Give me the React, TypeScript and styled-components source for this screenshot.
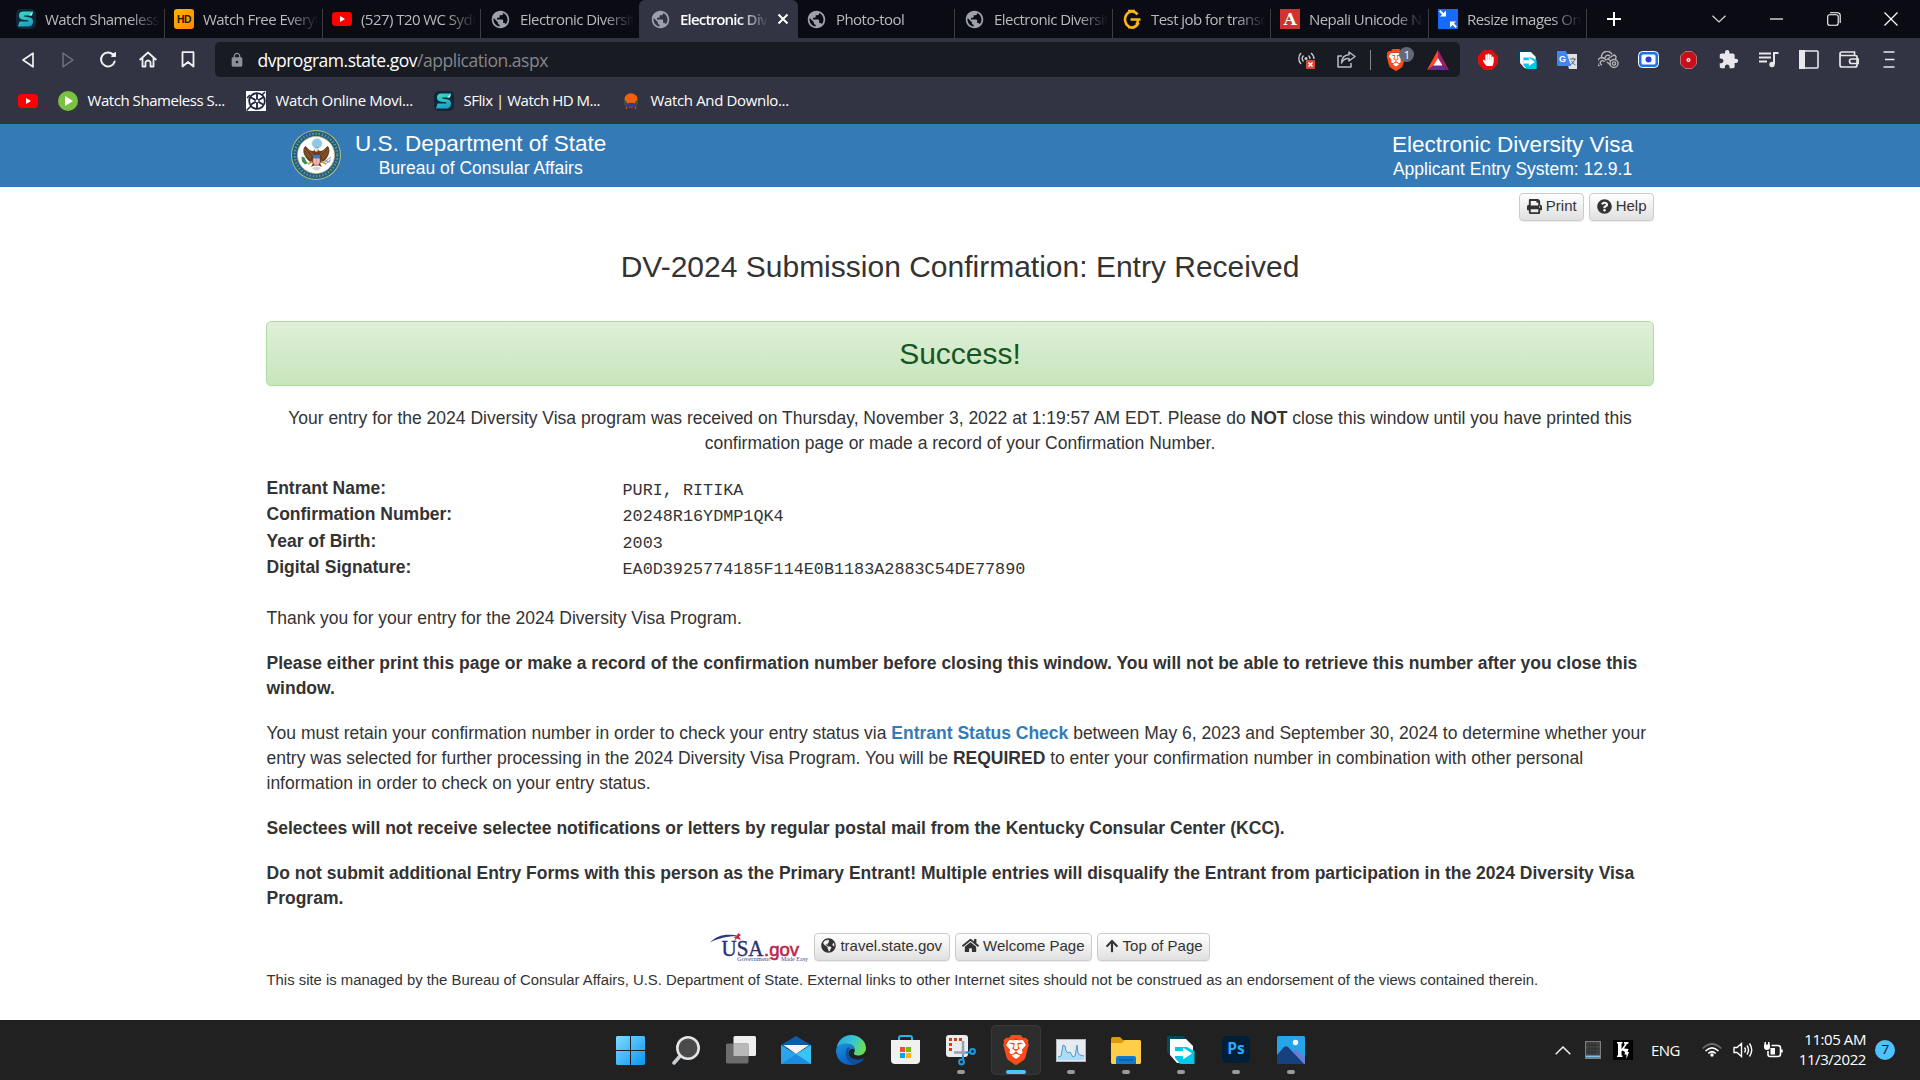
import React from "react";
import styled, { createGlobalStyle, css } from "styled-components";
import { MdPublic, MdLock, MdExtension } from "react-icons/md";
import {
  FaPrint,
  FaQuestionCircle,
  FaGlobeAmericas,
  FaHome,
  FaArrowUp,
  FaHandPaper,
} from "react-icons/fa";
import { SiBrave } from "react-icons/si";

const ui = `"Open Sans", "Noto Sans", sans-serif`;
const arial = `"Liberation Sans", Arial, sans-serif`;

const Global = createGlobalStyle`
  * { box-sizing: border-box; }
  body { margin: 0; background: #fff; overflow: hidden; }
  svg { display: block; flex: none; }
`;

const Screen = styled.div`
  width: 1920px;
  height: 1080px;
  display: flex;
  flex-direction: column;
  overflow: hidden;
  font-family: ${arial};
`;

/* ---------- Browser chrome ---------- */

const TabStrip = styled.div`
  height: 38px;
  flex: none;
  background: #0b0b14;
  display: flex;
  padding-left: 7px;
`;

const Tab = styled.div<{ $active?: boolean; $bare?: boolean }>`
  width: 158px;
  flex: none;
  display: flex;
  align-items: center;
  padding: 0 5px 0 9px;
  gap: 9px;
  font: 15px/20px ${ui};
  letter-spacing: -0.55px;
  color: #b9bac0;
  background: linear-gradient(#3c3c42, #3c3c42) right 9px / 1px 29px no-repeat;
  ${(p) => p.$bare && css`background: none;`}
  ${(p) =>
    p.$active &&
    css`
      background: #323443;
      color: #fff;
      font-weight: 600;
      letter-spacing: -0.8px;
      border-radius: 6px 6px 0 0;
      padding-right: 9px;
      padding-left: 11px;
      width: 159px;
      margin-right: -1px;
    `}
`;

const TabTitle = styled.span`
  flex: 1;
  min-width: 0;
  overflow: hidden;
  white-space: nowrap;
  padding-bottom: 1px;
  mask-image: linear-gradient(to right, #000 calc(100% - 30px), transparent);
`;

const NewTab = styled.div`
  width: 53px;
  display: flex;
  align-items: center;
  justify-content: center;
`;

const WindowButtons = styled.div`
  margin-left: auto;
  display: flex;
  align-items: center;
`;

const WindowButton = styled.div`
  width: 57.5px;
  display: flex;
  justify-content: center;
`;

const Toolbar = styled.div`
  height: 43px;
  flex: none;
  background: #323443;
  display: flex;
  align-items: center;
  padding-left: 8px;
`;

const NavSlot = styled.div`
  width: 39.9px;
  display: flex;
  justify-content: center;
`;

const AddressBar = styled.div`
  width: 1245px;
  height: 35px;
  margin-left: 8px;
  border-radius: 5px;
  background: #191b22;
  display: flex;
  align-items: center;
  padding-left: 14px;
  color: #8e9097;
`;

const Url = styled.span`
  margin-left: 12px;
  font: 17.5px/24px ${ui};
  letter-spacing: -0.48px;
  color: #85868c;
  b { font-weight: 400; color: #fff; }
`;

const AddressActions = styled.div`
  margin-left: auto;
  display: flex;
  align-items: center;
`;

const ActionSlot = styled.div<{ $w: number }>`
  width: ${(p) => p.$w}px;
  display: flex;
  justify-content: center;
  position: relative;
`;

const Badge = styled.span`
  position: absolute;
  left: 24px;
  top: -2px;
  width: 15px;
  height: 15px;
  border-radius: 8px;
  background: #656877;
  color: #fff;
  font: 11px/15px ${ui};
  text-align: center;
`;

const Extensions = styled.div`
  margin-left: 7px;
  display: flex;
  align-items: center;
`;

const ExtSlot = styled.div`
  width: 40.2px;
  display: flex;
  justify-content: center;
  color: #e8e8ea;
`;

const Bookmarks = styled.div`
  height: 43px;
  flex: none;
  background: #323443;
  display: flex;
  align-items: center;
  padding: 0 0 4px 18px;
`;

const Bookmark = styled.div<{ $w: number; $spacing?: number }>`
  width: ${(p) => p.$w}px;
  display: flex;
  align-items: center;
  gap: 9.5px;
  font: 15px/20px ${ui};
  letter-spacing: ${(p) => p.$spacing ?? -0.35}px;
  color: #fff;
  white-space: nowrap;
`;

const BookmarkLabel = styled.span`
  padding-bottom: 2px;
`;

/* ---------- Page ---------- */

const SiteHeader = styled.header`
  height: 63px;
  flex: none;
  background: #337ab7;
  color: #fff;
  display: flex;
  padding: 6px 287px 0 291px;
`;

const Brand = styled.div<{ $right?: boolean }>`
  display: flex;
  flex-direction: column;
  align-items: center;
  margin-left: ${(p) => (p.$right ? "auto" : "14px")};
  padding-top: ${(p) => (p.$right ? 2 : 1)}px;
`;

const BrandTitle = styled.div`
  font-size: 22.5px;
  line-height: 26px;
`;

const BrandSub = styled.div`
  font-size: 17.5px;
  line-height: 23px;
`;

const Page = styled.main`
  flex: 1;
  width: 1388px;
  margin: 0 auto;
  color: #333;
  font-size: 17.5px;
  line-height: 25px;
  display: flex;
  flex-direction: column;
`;

const ButtonRow = styled.div<{ $center?: boolean }>`
  display: flex;
  align-items: center;
  gap: 5px;
  justify-content: ${(p) => (p.$center ? "center" : "flex-end")};
  margin-top: ${(p) => (p.$center ? 21 : 6)}px;
`;

const Button = styled.button`
  height: 28px;
  padding: 0 6.5px 2px;
  display: flex;
  align-items: center;
  gap: 4px;
  border: 1px solid #ccc;
  border-radius: 4px;
  background: linear-gradient(#fff, #e0e0e0);
  box-shadow: inset 0 1px 0 rgba(255, 255, 255, 0.15), 0 1px 1px rgba(0, 0, 0, 0.075);
  color: #333;
  font: 15px/22px ${arial};
  white-space: nowrap;
`;

const Title = styled.h1`
  margin: 29px 0 38px;
  font-size: 30px;
  line-height: 33px;
  font-weight: 400;
  text-align: center;
`;

const Alert = styled.div`
  height: 65px;
  border: 1px solid #b2dba1;
  border-radius: 5px;
  background: linear-gradient(#dff0d8, #c8e5bc);
  box-shadow: 0 1px 2px rgba(0, 0, 0, 0.05);
  color: #155724;
  font-size: 30px;
  line-height: 63px;
  text-align: center;
`;

const Intro = styled.p`
  margin: 20px 0;
  text-align: center;
`;

const Details = styled.dl`
  margin: 0 0 24px;
  padding-left: 0.5px;
  display: grid;
  grid-template-columns: 356px 1fr;
  grid-auto-rows: 26.4px;
`;

const Term = styled.dt`
  font-weight: 700;
`;

const Value = styled.dd`
  margin: 0;
  padding-top: 2px;
  font: 16.8px/26px "Liberation Mono", "Courier New", monospace;
`;

const Para = styled.p<{ $bold?: boolean }>`
  margin: 0 0 20px;
  padding-left: 0.5px;
  white-space: nowrap;
  font-weight: ${(p) => (p.$bold ? 700 : 400)};
  &:last-of-type { margin-bottom: 0; }
`;

const Link = styled.a`
  color: #337ab7;
  font-weight: 700;
`;

const Disclaimer = styled.div`
  margin-top: 6px;
  padding-left: 0.5px;
  font-size: 14.87px;
  line-height: 24px;
  white-space: nowrap;
`;

/* ---------- Taskbar ---------- */

const Taskbar = styled.footer`
  height: 60px;
  flex: none;
  background: #212121;
  display: flex;
  align-items: center;
  padding-left: 603px;
  color: #fff;
`;

const TaskSlot = styled.div`
  width: 55px;
  height: 60px;
  display: flex;
  align-items: center;
  justify-content: center;
`;

const TaskTile = styled.div<{ $active?: boolean }>`
  width: 50px;
  height: 50px;
  border-radius: 5px;
  display: flex;
  align-items: center;
  justify-content: center;
  position: relative;
  ${(p) => p.$active && css`background: #2d2d2d; box-shadow: inset 0 0 0 1px #383838;`}
`;

const Indicator = styled.span<{ $active?: boolean }>`
  position: absolute;
  bottom: 1px;
  left: 50%;
  transform: translateX(-50%);
  width: ${(p) => (p.$active ? 20 : 8)}px;
  height: 4px;
  border-radius: 2px;
  background: ${(p) => (p.$active ? "#4cc2ff" : "#9a9a9a")};
`;

const Tray = styled.div`
  margin-left: auto;
  display: flex;
  align-items: center;
  padding-right: 25px;
  font: 15px/20px ${ui};
  letter-spacing: -0.5px;
`;

const TraySlot = styled.div<{ $w: number }>`
  width: ${(p) => p.$w}px;
  display: flex;
  justify-content: center;
`;

const Clock = styled.div`
  width: 76px;
  text-align: right;
  white-space: nowrap;
  margin: 0 9px 0 0;
  padding-bottom: 2px;
  letter-spacing: -0.42px;
`;

const Count = styled.div`
  width: 20px;
  height: 20px;
  border-radius: 50%;
  background: #4cc2ff;
  color: #111;
  font-size: 13.5px;
  line-height: 19px;
  text-align: center;
`;

/* ---------- Icons ---------- */

const Sflix = () => (
  <svg width="20" height="20" viewBox="0 0 20 20">
    <defs>
      <linearGradient id="sf" x1="0" y1="0" x2="0.4" y2="1">
        <stop offset="0" stopColor="#3fe0c0" />
        <stop offset="1" stopColor="#1fa3c4" />
      </linearGradient>
    </defs>
    <rect width="20" height="20" rx="5" fill="#12263a" />
    <path d="M17 2.500H7.500C4.500 2.500 3 4 3 6.500S4.500 10.500 7 10.700L12 11.200C12.600 11.300 12.600 12.500 12 12.500H3.500L2 17.500H11.500C15.500 17.500 17 15.500 17 12.500S15.500 8.500 13 8.200L8.500 7.600C8 7.500 8 6.500 8.500 6.500H15Z" fill="url(#sf)" />
    <path d="M13 6.500L17 2.500L16 6.500Z" fill="#a6fff0" />
  </svg>
);

const HdIcon = () => (
  <svg width="20" height="20" viewBox="0 0 20 20">
    <defs>
      <linearGradient id="hd" x1="0" y1="0" x2="1" y2="1">
        <stop offset="0" stopColor="#ffb300" />
        <stop offset="1" stopColor="#ff8a00" />
      </linearGradient>
    </defs>
    <rect width="20" height="20" rx="3" fill="url(#hd)" />
    <text x="10" y="14" textAnchor="middle" fontFamily="Liberation Sans, sans-serif" fontWeight="700" fontSize="11.500" textLength="14" lengthAdjust="spacingAndGlyphs" fill="#1d1505">HD</text>
  </svg>
);

const YouTube = () => (
  <svg width="20" height="20" viewBox="0 0 20 20">
    <rect y="3" width="20" height="14" rx="3.500" fill="#f00" />
    <path d="M8 7L13 10L8 13Z" fill="#fff" />
  </svg>
);

const Globe = () => <MdPublic size={21} color="#9da1ab" />;

const GIcon = () => (
  <svg width="20" height="20" viewBox="0 0 20 20" fill="none" stroke="#fdb515" strokeWidth="2.600">
    <path d="M15.500 5.500A7 8 0 1 0 16.500 13.500M8.500 10.500H18.500M16 10.500A7 8 0 0 1 14.500 15.500" />
    <path d="M6 1.500H13M6 18.700H13" strokeWidth="1.600" />
  </svg>
);

const NepaliIcon = () => (
  <svg width="20" height="20" viewBox="0 0 20 20">
    <rect width="20" height="20" fill="#d0342c" />
    <text x="10" y="15.500" textAnchor="middle" fontFamily="DejaVu Serif, serif" fontWeight="700" fontSize="16.500" fill="#fff">A</text>
  </svg>
);

const ResizeIcon = () => (
  <svg width="20" height="20" viewBox="0 0 20 20" fill="#fff">
    <rect width="20" height="20" fill="#1769ff" />
    <path d="M8 1.500V7.500H2L4 5.500L1 2.500L2.500 1L5.500 4Z" />
    <path d="M12 12.500H18L16 14.500L19 17.500L17.500 19L14.500 16L12 18.500Z" />
  </svg>
);

const Reel = () => (
  <svg width="20" height="20" viewBox="0 0 20 20">
    <rect width="20" height="20" fill="#fff" />
    <circle cx="11" cy="10" r="7.800" fill="none" stroke="#1b2140" strokeWidth="1.800" />
    <path d="M11 3V17M5 6.500L17 13.500M5 13.500L17 6.500" stroke="#1b2140" strokeWidth="1.800" />
    <circle cx="11" cy="10" r="2" fill="#fff" stroke="#1b2140" />
    <path d="M0.500 19.500L5.500 14.500M1 7L4 4M16 4L19 1" stroke="#1b2140" strokeWidth="1.500" />
  </svg>
);

const GreenPlay = () => (
  <svg width="20" height="20" viewBox="0 0 20 20">
    <circle cx="10" cy="10" r="10" fill="#7ac142" />
    <path d="M7 5L15 10L7 15Z" fill="#fff" />
  </svg>
);

const Throne = () => (
  <svg width="20" height="20" viewBox="0 0 20 20">
    <ellipse cx="10" cy="8" rx="6.500" ry="5.800" fill="#f2600c" />
    <path d="M3 9.500Q5.500 9 6 12.500Q10 11 14 12.500Q14.500 9 17 9.500Q18 12.500 16 15H4Q2 12.500 3 9.500Z" fill="#2e5a3a" />
    <path d="M5 13Q10 11.500 15 13V15.500H5Z" fill="#2b3a9c" />
    <path d="M5.500 15.500V18M14.500 15.500V18M9 15.500V17M11 15.500V17" stroke="#e0401c" strokeWidth="1.300" />
  </svg>
);

const line = { fill: "none", stroke: "#f0f0f2", strokeLinejoin: "round" as const, strokeLinecap: "round" as const };

const Seal = () => (
  <svg width="50" height="50" viewBox="0 0 50 50">
    <circle cx="25" cy="25" r="25" fill="#b9bd7e" />
    <circle cx="25" cy="25" r="24" fill="#1f5f86" />
    <circle cx="25" cy="25" r="21.300" fill="none" stroke="#6f9a80" strokeWidth="2.400" strokeDasharray="1.300 1.900" />
    <circle cx="25" cy="25" r="18.500" fill="#fff" stroke="#c9c483" strokeWidth="0.800" />
    <circle cx="26" cy="13.500" r="5" fill="#8fc7e6" stroke="#b7d8ea" strokeWidth="0.600" />
    <path d="M23.500 20.500C21 22 18 20 14.500 16C11.500 18 12 23 14 26C16 30 19 32.500 22 33L20 37L23 35.500H28L31 37L29 33C32 32.500 35 30 37 26C39 22 39 18 36.500 16C33 20 30 22 27.500 20.500L27 18Q25 16.500 24 18Z" fill="#6b3f1d" />
    <path d="M13.500 19L20 27M14 22.500L19.500 29M37.500 19L31 27M37 22.500L31.500 29M16 18.500L22 25M35 18.500L29 25" stroke="#a0703c" strokeWidth="0.800" />
    <path d="M22 27H29V31.500Q29 34 25.500 35.500Q22 34 22 31.500Z" fill="#ea97a2" />
    <path d="M22 25H29V28.500H22Z" fill="#3f78c0" />
    <path d="M24 28.500V34.500M27 28.500V34.500" stroke="#fff" strokeWidth="0.600" />
    <path d="M24 18.500Q25.500 16.500 27 18.500L26.500 21.500H24Z" fill="#efe9d8" />
    <path d="M10.500 26.500L13.500 27.500L15 31L17 33L14 34.500L11 31.500Z" fill="#3d8b5a" />
    <path d="M17 34L21.500 31.500M35 34L30 31.500" stroke="#c39a35" strokeWidth="1.500" />
    <path d="M33.500 32L40 27M34.500 34L40 29.500M33 30.500L39 32" stroke="#8b929a" strokeWidth="1" />
    <path d="M21 38L25.500 36.500L30 38L27 40.500H24Z" fill="#d8d3cf" />
  </svg>
);

const UsaGov = () => (
  <svg width="99" height="30" viewBox="0 0 99 30">
    <path d="M0 10.500C7 3 16 1 30 4C18 3.800 8 6.500 0 10.500Z" fill="#2b3a80" />
    <path d="M23 5L27 4L28 1L31 3L29 4.500L31 8L27 6.500L24 9L25.500 6Z" fill="#c8203f" />
    <text x="11.500" y="24" fontFamily="Liberation Serif, serif" fontSize="23" fill="#2c2f73" stroke="#2c2f73" strokeWidth="0.400" textLength="42" lengthAdjust="spacingAndGlyphs">USA</text>
    <text x="54" y="24" fontFamily="Liberation Sans, sans-serif" fontSize="19" fill="#bb2649" stroke="#bb2649" strokeWidth="0.600" textLength="35" lengthAdjust="spacingAndGlyphs">.gov</text>
    <text x="27" y="28.800" fontFamily="Liberation Serif, serif" fontSize="5.500" fill="#4a4f8c" textLength="33" lengthAdjust="spacingAndGlyphs">Government</text>
    <text x="71" y="28.800" fontFamily="Liberation Serif, serif" fontSize="5.500" fill="#4a4f8c" textLength="27" lengthAdjust="spacingAndGlyphs">Made Easy</text>
  </svg>
);

const ShareCube = ({ size }: { size: number }) => (
  <svg width={size} height={size} viewBox="0 0 28 28">
    <path d="M0 0H17L20 5H6V22L0 16Z" fill="#06465f" />
    <path d="M3 3H19L26 10V27H10L3 19Z" fill="#fff" />
    <path d="M8 11H20L27.500 15V28H13L8 22Z" fill="#00c8e6" />
    <path d="M8 15H16V11.500L25 17.500L16 23.500V20H8Z" fill="#fff" />
  </svg>
);

const Brave = ({ size }: { size: number }) => (
  <svg width={size} height={size} viewBox="0 0 24 24">
    <path d="M6 4H18L20 8L17 18L12 22L7 18L4 8Z" fill="#fff" />
    <SiBrave size={24} color="#fb4a1c" />
  </svg>
);

const tabs: { icon: React.ReactNode; title: string; active?: boolean; bare?: boolean }[] = [
  { icon: <Sflix />, title: "Watch Shameless S" },
  { icon: <HdIcon />, title: "Watch Free Everyth" },
  { icon: <YouTube />, title: "(527) T20 WC Sydn" },
  { icon: <Globe />, title: "Electronic Diversity", bare: true },
  { icon: <Globe />, title: "Electronic Diver", active: true },
  { icon: <Globe />, title: "Photo-tool" },
  { icon: <Globe />, title: "Electronic Diversity" },
  { icon: <GIcon />, title: "Test job for transcri" },
  { icon: <NepaliIcon />, title: "Nepali Unicode Ne" },
  { icon: <ResizeIcon />, title: "Resize Images Onli" },
];

const taskIcons: { icon: React.ReactNode; running?: boolean; active?: boolean }[] = [
  {
    icon: (
      <svg width="29" height="29" viewBox="0 0 29 29">
        <defs>
          <linearGradient id="win" x1="0" y1="0" x2="1" y2="1">
            <stop offset="0" stopColor="#7fdcff" />
            <stop offset="1" stopColor="#0a95f5" />
          </linearGradient>
        </defs>
        <path d="M1 0H14V14H0V1ZM15 0H28L29 1V14H15ZM0 15H14V29H1L0 28ZM15 15H29V28L28 29H15Z" fill="url(#win)" />
      </svg>
    ),
  },
  {
    icon: (
      <svg width="28" height="29" viewBox="0 0 28 29">
        <path d="M2 27L9 19" stroke="#c9ccd0" strokeWidth="3.500" strokeLinecap="round" />
        <circle cx="16" cy="12" r="10.700" fill="#4a4a4a" stroke="#e2e5e8" strokeWidth="2.600" />
      </svg>
    ),
  },
  {
    icon: (
      <svg width="30" height="28" viewBox="0 0 30 28">
        <rect x="7.500" width="22.500" height="20" rx="1.500" fill="#eeeeee" />
        <rect y="7.500" width="22.500" height="20" rx="1.500" fill="#6c6c6c" />
        <rect x="7.500" y="7.500" width="15" height="12.500" fill="#b9b9b9" />
      </svg>
    ),
  },
  {
    icon: (
      <svg width="30" height="28" viewBox="0 0 30 28">
        <path d="M0 9L15 0L30 9V12H0Z" fill="#0d5aa7" />
        <path d="M0 9L15 18L30 9V28H0Z" fill="#2aa5ea" />
        <path d="M2.500 9H28L15 18Z" fill="#f4f4f4" />
        <path d="M0 28L30 9V28Z" fill="#38c3f6" />
        <path d="M0 28L15 18L30 28Z" fill="#1b8be0" />
      </svg>
    ),
  },
  {
    icon: (
      <svg width="30" height="30" viewBox="0 0 30 30">
        <defs>
          <linearGradient id="e1" x1="0" y1="0.300" x2="1" y2="0.600">
            <stop offset="0" stopColor="#2ba7dc" />
            <stop offset="0.500" stopColor="#35c6d2" />
            <stop offset="1" stopColor="#6fe04a" />
          </linearGradient>
          <linearGradient id="e2" x1="0" y1="0" x2="0.500" y2="1">
            <stop offset="0" stopColor="#1793e2" />
            <stop offset="1" stopColor="#0d5cb8" />
          </linearGradient>
        </defs>
        <path d="M0.500 13C2 5 8 0 15 0C23 0 30 6 30 13C30 18 26 20.500 22 20.500C19 20.500 17.500 19.500 18 18C20 15 18 9 12 9C6 9 2 11 0.500 13Z" fill="url(#e1)" />
        <path d="M0 15C1 10 6 8 11 8.500C16 9 18.500 12 18.500 15C16 12 12 15 12.500 19C13 24 19 28 25 25.500C22 29 18 30 15 30C6 30 0 24 0 15Z" fill="url(#e2)" />
        <path d="M12 12C8 17 9 26 18 29.700C23 29 27 26 29 22.500C24 26 15 25 12.300 19C11.700 16 12.500 14.500 14 13Z" fill="#0c4fa0" />
      </svg>
    ),
  },
  {
    icon: (
      <svg width="29" height="30" viewBox="0 0 29 30">
        <path d="M8 6V3Q8 1 10 1H19Q21 1 21 3V6" fill="none" stroke="#27b5ec" strokeWidth="2" />
        <path d="M0 5H29V25Q29 29 25 29H4Q0 29 0 25Z" fill="#f1f1f1" />
        <path d="M9 12H14V17H9Z" fill="#f25022" />
        <path d="M15 12H20V17H15Z" fill="#7fba00" />
        <path d="M9 18H14V23H9Z" fill="#00a4ef" />
        <path d="M15 18H20V23H15Z" fill="#ffb900" />
      </svg>
    ),
  },
  {
    running: true,
    icon: (
      <svg width="30" height="31" viewBox="0 0 30 31">
        <rect width="22" height="22" rx="3" fill="#e9ecf0" />
        <path d="M16 4.500H4.500V16.500" fill="none" stroke="#d83b01" strokeWidth="3" strokeDasharray="3 2" />
        <path d="M17 6V20M8 17.500H22" stroke="#9aa1a8" strokeWidth="2.600" />
        <circle cx="26.500" cy="16.500" r="2.400" fill="none" stroke="#1a9be6" strokeWidth="2" />
        <circle cx="15.500" cy="27" r="2.400" fill="none" stroke="#1a9be6" strokeWidth="2" />
        <path d="M17 20V25M20 17.500H24" stroke="#1a9be6" strokeWidth="2" />
      </svg>
    ),
  },
  { running: true, active: true, icon: <Brave size={30} /> },
  {
    running: true,
    icon: (
      <svg width="30" height="23" viewBox="0 0 30 23">
        <rect x="0.500" y="0.500" width="29" height="22" fill="#e6ebf0" stroke="#b0b6bb" />
        <path d="M2 18L5 17L7 6L9 7L10 12L12 14L14 13L17 18L19 17L21 6L22 14L24 16L28 17V21H2Z" fill="#aadcf7" />
        <path d="M2 18L5 17L7 6L9 7L10 12L12 14L14 13L17 18L19 17L21 6L22 14L24 16L28 17" fill="none" stroke="#4a9ad0" />
      </svg>
    ),
  },
  {
    running: true,
    icon: (
      <svg width="30" height="27" viewBox="0 0 30 27">
        <path d="M0 2Q0 0 2 0H9L12 3H16V8H0Z" fill="#dd9b0c" />
        <path d="M0 6H11L14 3H29L30 4V26L29 27H1L0 26Z" fill="#ffcd48" />
        <path d="M5 27V21Q5 19 7 19H23Q25 19 25 21V27Z" fill="#1379cf" />
        <path d="M8 23H22" stroke="#0a4f97" />
      </svg>
    ),
  },
  { running: true, icon: <ShareCube size={28} /> },
  {
    running: true,
    icon: (
      <svg width="28" height="28" viewBox="0 0 28 28">
        <rect width="28" height="27" rx="5" fill="#001e36" />
        <text x="14" y="18" textAnchor="middle" fontFamily="Open Sans, sans-serif" fontWeight="700" fontSize="15.500" fill="#31a8ff">Ps</text>
      </svg>
    ),
  },
  {
    running: true,
    icon: (
      <svg width="28" height="28" viewBox="0 0 28 28">
        <rect width="28" height="28" rx="1.500" fill="#27a4e8" />
        <path d="M10 22L19 13L28 22V28H10Z" fill="#6a7bd6" />
        <path d="M0 19L7 11Q9 9.500 11 11L27 28H0Z" fill="#17407f" />
        <circle cx="18.500" cy="6.500" r="2.700" fill="#fff" />
      </svg>
    ),
  },
];

const details = [
  ["Entrant Name:", "PURI, RITIKA"],
  ["Confirmation Number:", "20248R16YDMP1QK4"],
  ["Year of Birth:", "2003"],
  ["Digital Signature:", "EA0D3925774185F114E0B1183A2883C54DE77890"],
];

export default function App() {
  return (
    <Screen>
      <Global />
      <TabStrip>
        {tabs.map((t, i) => (
          <Tab key={i} $active={t.active} $bare={t.bare}>
            {t.icon}
            <TabTitle>{t.title}</TabTitle>
            {t.active && (
              <svg width="12" height="12" viewBox="0 0 12 12" stroke="#fff" strokeWidth="2">
                <path d="M1.500 1.500L10.500 10.500M10.500 1.500L1.500 10.500" />
              </svg>
            )}
          </Tab>
        ))}
        <NewTab>
          <svg width="14" height="14" viewBox="0 0 14 14" stroke="#fff" strokeWidth="2">
            <path d="M7 0V14M0 7H14" />
          </svg>
        </NewTab>
        <WindowButtons>
          <WindowButton>
            <svg width="14" height="8" viewBox="0 0 14 8" fill="none" stroke="#d8d8dc" strokeWidth="1.200"><path d="M0.500 0.800L7 7L13.500 0.800" /></svg>
          </WindowButton>
          <WindowButton>
            <svg width="13" height="2" viewBox="0 0 13 2"><path d="M0 1H13" stroke="#fff" strokeWidth="1.200" /></svg>
          </WindowButton>
          <WindowButton>
            <svg width="14" height="14" viewBox="0 0 14 14" fill="none" stroke="#fff" strokeWidth="1.100">
              <rect x="0.700" y="2.700" width="10.500" height="10.500" rx="2" />
              <path d="M3 0.700H10.500Q13.200 0.700 13.200 3.400V11" />
            </svg>
          </WindowButton>
          <WindowButton>
            <svg width="14" height="14" viewBox="0 0 14 14" stroke="#fff" strokeWidth="1.200"><path d="M0.500 0.500L13.500 13.500M13.500 0.500L0.500 13.500" /></svg>
          </WindowButton>
        </WindowButtons>
      </TabStrip>

      <Toolbar>
        <NavSlot>
          <svg width="14" height="16" viewBox="0 0 14 16" {...line} strokeWidth="1.700"><path d="M12 1.200V14.800L2 8Z" /></svg>
        </NavSlot>
        <NavSlot>
          <svg width="14" height="16" viewBox="0 0 14 16" {...line} stroke="#6f717d" strokeWidth="1.500"><path d="M2 1.200V14.800L12 8Z" /></svg>
        </NavSlot>
        <NavSlot>
          <svg width="18" height="18" viewBox="0 0 18 18" {...line} strokeWidth="2">
            <path d="M14 3.500A7 7 0 1 0 15.700 10.500" />
            <circle cx="14.500" cy="4" r="2" fill="#f0f0f2" stroke="none" />
            <path d="M13 5.500H16.500V1.500Z" fill="#f0f0f2" strokeWidth="1" />
          </svg>
        </NavSlot>
        <NavSlot>
          <svg width="18" height="17" viewBox="0 0 18 17" {...line} strokeWidth="1.800"><path d="M1.200 8.500L9 1.500L16.800 8.500M3.500 7V15.500H6.500V11Q9 8 11.500 11V15.500H14.500V7" /></svg>
        </NavSlot>
        <NavSlot>
          <svg width="14" height="17" viewBox="0 0 14 17" {...line} strokeWidth="1.800"><path d="M1.500 1.200H12.500V15.500L7 11L1.500 15.500Z" /></svg>
        </NavSlot>
        <AddressBar>
          <MdLock size={16} />
          <Url><b>dvprogram.state.gov</b>/application.aspx</Url>
          <AddressActions>
            <ActionSlot $w={39}>
              <svg width="19" height="18" viewBox="0 0 19 18" fill="none" stroke="#c9cacd" strokeWidth="1.400">
                <path d="M4 2A8 8 0 0 0 4 13M6.500 4.500A4.500 4.500 0 0 0 6.500 10.500M14 2A8 8 0 0 1 17 8M11.500 4.500A4.500 4.500 0 0 1 13 8" />
                <circle cx="9" cy="7.500" r="1.500" fill="#c9cacd" stroke="none" />
                <rect x="9" y="9" width="9" height="9" rx="1" fill="#d9483b" stroke="none" />
                <path d="M11.500 11.500L15.500 15.500M15.500 11.500L11.500 15.500" stroke="#fff" />
              </svg>
            </ActionSlot>
            <ActionSlot $w={40}>
              <svg width="19" height="17" viewBox="0 0 19 17" fill="none" stroke="#b9bbc2" strokeWidth="1.500" strokeLinejoin="round">
                <path d="M5 5H1V16H14V12M12 1L18 5.500L12 10V7.500Q7 7 4.500 12Q5 4 12 3.800Z" />
              </svg>
            </ActionSlot>
            <ActionSlot $w={9}>
              <svg width="1" height="20"><rect width="1" height="20" fill="#85868c" /></svg>
            </ActionSlot>
            <ActionSlot $w={41}>
              <Brave size={22} />
              <Badge>1</Badge>
            </ActionSlot>
            <ActionSlot $w={44}>
              <svg width="22" height="20" viewBox="0 0 22 20">
                <path d="M11 0L0 20L11 13Z" fill="#ff4724" />
                <path d="M11 0L22 20L11 13Z" fill="#9e1f63" />
                <path d="M0 20H22L11 13Z" fill="#662d91" />
                <path d="M11 8L15.500 15.500H6.500Z" fill="#fff" />
              </svg>
            </ActionSlot>
          </AddressActions>
        </AddressBar>
        <Extensions>
          <ExtSlot>
            <svg width="20" height="20" viewBox="0 0 20 20">
              <path d="M6 0H14L20 6V14L14 20H6L0 14V6Z" fill="#e40d0d" />
              <FaHandPaper x={4} y={3.5} size={12.5} color="#fff" />
            </svg>
          </ExtSlot>
          <ExtSlot><ShareCube size={19} /></ExtSlot>
          <ExtSlot>
            <svg width="21" height="20" viewBox="0 0 21 20">
              <path d="M8 4H20V19H12Z" fill="#dfe1e5" />
              <path d="M0 1H9L14 16H1L0 15Z" fill="#4285f4" />
              <text x="2" y="12" fontFamily="Liberation Sans, sans-serif" fontWeight="700" fontSize="9" fill="#fff">G</text>
              <path d="M13 9H19M16 7.500V9M18 9Q17 13 13 15M14.500 11Q16 14 18.500 15" stroke="#5f6b7a" fill="none" />
            </svg>
          </ExtSlot>
          <ExtSlot>
            <svg width="21" height="18" viewBox="0 0 21 18" fill="none" stroke="#b4b4b4" strokeWidth="1.400">
              <path d="M1.500 15A4.500 4.500 0 1 1 8 9.500M4 14A2.200 2.200 0 1 1 6.500 11M4 8A5 5 0 0 1 14 3.500M7 7A3 3 0 0 1 12 5M8 9L16 4Q19 5 17.500 8" />
              <circle cx="16" cy="12.500" r="4" />
              <circle cx="16" cy="12.500" r="1.600" />
              <path d="M9 11L12.500 14M10 8L13 10" />
            </svg>
          </ExtSlot>
          <ExtSlot>
            <svg width="21" height="17" viewBox="0 0 21 17">
              <rect x="0.500" y="0.500" width="20" height="16" rx="4" fill="#1a73e8" stroke="#fff" />
              <rect x="3.500" y="3.500" width="14" height="10" rx="1.500" fill="#fff" />
              <circle cx="10.500" cy="8.500" r="3" fill="#2b3fd0" />
            </svg>
          </ExtSlot>
          <ExtSlot>
            <svg width="17" height="18" viewBox="0 0 17 18">
              <path d="M5 0.500H12L16.500 5V13L12 17.500H5L0.500 13V5Z" fill="#c8101a" stroke="#e8a0a0" strokeWidth="0.600" />
              <circle cx="8.500" cy="9" r="2" fill="#fff" />
              <circle cx="8.500" cy="9" r="0.700" fill="#c8101a" />
            </svg>
          </ExtSlot>
          <ExtSlot><MdExtension size={21} /></ExtSlot>
          <ExtSlot>
            <svg width="20" height="17" viewBox="0 0 20 17" fill="none" stroke="#e8e8ea" strokeWidth="2">
              <path d="M0 2.500H12M0 6.500H12M0 10.500H8M15 13V2H19.500" />
              <circle cx="13" cy="13.500" r="2.700" fill="#e8e8ea" stroke="none" />
            </svg>
          </ExtSlot>
          <ExtSlot>
            <svg width="20" height="19" viewBox="0 0 20 19">
              <rect x="1" y="1" width="18" height="17" rx="1" fill="none" stroke="#e8e8ea" strokeWidth="1.600" />
              <rect width="6" height="19" fill="#e8e8ea" />
            </svg>
          </ExtSlot>
          <ExtSlot>
            <svg width="20" height="17" viewBox="0 0 20 17" fill="none" stroke="#e8e8ea" strokeWidth="1.700">
              <path d="M1 3.500V14Q1 16 3 16H16Q18 16 18 14V6Q18 4.500 16 4.500H2.500Q1 4.500 1 3Q1 1 3 1H15.500V4.500" />
              <path d="M19.200 8H12.500Q10.500 8 10.500 10.200T12.500 12.500H19.200Z" />
            </svg>
          </ExtSlot>
          <ExtSlot>
            <svg width="12" height="17" viewBox="0 0 12 17" stroke="#e8e8ea" strokeWidth="1.500"><path d="M0.500 1H11.500M2 8.500H11.500M0.500 16H11.500" /></svg>
          </ExtSlot>
        </Extensions>
      </Toolbar>

      <Bookmarks>
        <Bookmark $w={40}><YouTube /></Bookmark>
        <Bookmark $w={188} $spacing={-0.45}><GreenPlay /><BookmarkLabel>Watch Shameless S...</BookmarkLabel></Bookmark>
        <Bookmark $w={188} $spacing={-0.3}><Reel /><BookmarkLabel>Watch Online Movi...</BookmarkLabel></Bookmark>
        <Bookmark $w={187} $spacing={-0.47}><Sflix /><BookmarkLabel>SFlix | Watch HD M...</BookmarkLabel></Bookmark>
        <Bookmark $w={200}><Throne /><BookmarkLabel>Watch And Downlo...</BookmarkLabel></Bookmark>
      </Bookmarks>

      <SiteHeader>
        <Seal />
        <Brand>
          <BrandTitle>U.S. Department of State</BrandTitle>
          <BrandSub>Bureau of Consular Affairs</BrandSub>
        </Brand>
        <Brand $right>
          <BrandTitle>Electronic Diversity Visa</BrandTitle>
          <BrandSub>Applicant Entry System: 12.9.1</BrandSub>
        </Brand>
      </SiteHeader>

      <Page>
        <ButtonRow>
          <Button><FaPrint size={15} />Print</Button>
          <Button><FaQuestionCircle size={15} />Help</Button>
        </ButtonRow>
        <Title>DV-2024 Submission Confirmation: Entry Received</Title>
        <Alert>Success!</Alert>
        <Intro>
          Your entry for the 2024 Diversity Visa program was received on Thursday, November 3, 2022 at 1:19:57 AM EDT. Please do <b>NOT</b> close this window until you have printed this<br />
          confirmation page or made a record of your Confirmation Number.
        </Intro>
        <Details>
          {details.map(([k, v]) => (
            <React.Fragment key={k}>
              <Term>{k}</Term>
              <Value>{v}</Value>
            </React.Fragment>
          ))}
        </Details>
        <Para>Thank you for your entry for the 2024 Diversity Visa Program.</Para>
        <Para $bold>
          Please either print this page or make a record of the confirmation number before closing this window. You will not be able to retrieve this number after you close this<br />window.
        </Para>
        <Para>
          You must retain your confirmation number in order to check your entry status via <Link>Entrant Status Check</Link> between May 6, 2023 and September 30, 2024 to determine whether your<br />
          entry was selected for further processing in the 2024 Diversity Visa Program. You will be <b>REQUIRED</b> to enter your confirmation number in combination with other personal<br />
          information in order to check on your entry status.
        </Para>
        <Para $bold>Selectees will not receive selectee notifications or letters by regular postal mail from the Kentucky Consular Center (KCC).</Para>
        <Para $bold>
          Do not submit additional Entry Forms with this person as the Primary Entrant! Multiple entries will disqualify the Entrant from participation in the 2024 Diversity Visa<br />Program.
        </Para>
        <ButtonRow $center>
          <UsaGov />
          <Button><FaGlobeAmericas size={15} />travel.state.gov</Button>
          <Button><FaHome size={17} />Welcome Page</Button>
          <Button><FaArrowUp size={14} />Top of Page</Button>
        </ButtonRow>
        <Disclaimer>
          This site is managed by the Bureau of Consular Affairs, U.S. Department of State. External links to other Internet sites should not be construed as an endorsement of the views contained therein.
        </Disclaimer>
      </Page>

      <Taskbar>
        {taskIcons.map((t, i) => (
          <TaskSlot key={i}>
            <TaskTile $active={t.active}>
              {t.icon}
              {t.running && <Indicator $active={t.active} />}
            </TaskTile>
          </TaskSlot>
        ))}
        <Tray>
          <TraySlot $w={30}>
            <svg width="16" height="9" viewBox="0 0 16 9" fill="none" stroke="#eee" strokeWidth="1.500"><path d="M0.700 8.300L8 1L15.300 8.300" /></svg>
          </TraySlot>
          <TraySlot $w={30}>
            <svg width="16" height="18" viewBox="0 0 16 18">
              <rect x="0.500" y="0.500" width="15" height="17" fill="#454545" stroke="#7d7d7d" />
              <path d="M4 1V14M7 1V14M10 1V14M1 4H14M1 8H14M1 11H14" stroke="#2f2f2f" />
              <path d="M1 15.500H15" stroke="#7cc3f0" strokeWidth="2" />
            </svg>
          </TraySlot>
          <TraySlot $w={30}>
            <svg width="20" height="20" viewBox="0 0 20 20">
              <rect width="20" height="20" fill="#000" />
              <path d="M4 2H9.500V3.500H8.500V9L11.500 5V3.500H11V2H15.500V3.500L14 4L11 8.500L15.500 9L14.500 12H16L13.500 19V14.500H11.500L12 12L9.500 10.500L8.500 11.500V15.500H9.500V17H4V15.500H5V3.500H4Z" fill="#fff" />
            </svg>
          </TraySlot>
          <TraySlot $w={55}>ENG</TraySlot>
          <TraySlot $w={37}>
            <svg width="20" height="14" viewBox="0 0 20 14" fill="none" stroke="#fff" strokeWidth="1.700">
              <path d="M0.700 5.500Q10 -3.500 19.300 5.500" stroke="#6c6c6c" />
              <path d="M3.500 8Q10 1.500 16.500 8M6.300 10.500Q10 7 13.700 10.500" />
              <circle cx="10" cy="12" r="1.700" fill="#fff" stroke="none" />
            </svg>
          </TraySlot>
          <TraySlot $w={25}>
            <svg width="20" height="16" viewBox="0 0 20 16" fill="none" stroke="#fff" strokeWidth="1.400">
              <path d="M1 5.500H4L8.500 1.500V14.500L4 10.500H1ZM11.500 5.500Q13.500 8 11.500 10.500M14 3.500Q17 8 14 12.500M16.500 1.500Q21 8 16.500 14.500" />
            </svg>
          </TraySlot>
          <TraySlot $w={35}>
            <svg width="20" height="16" viewBox="0 0 20 16" fill="none" stroke="#fff" strokeWidth="1.600">
              <path d="M8.500 3.500H15Q17.500 3.500 17.500 6V12Q17.500 14.500 15 14.500H7Q5 14.500 5 12.500V9" />
              <path d="M18 7.500H19.700V10.500H18Z" fill="#fff" stroke="none" />
              <path d="M7.500 6H12V12.500H7.500Z" fill="#fff" stroke="none" />
              <path d="M1 2.500H7V5Q7 8 4 8T1 5ZM1.500 0H3V3H1.500ZM5 0H6.500V3H5Z" fill="#fff" stroke="none" />
            </svg>
          </TraySlot>
          <Clock>11:05 AM<br />11/3/2022</Clock>
          <Count>7</Count>
        </Tray>
      </Taskbar>
    </Screen>
  );
}
